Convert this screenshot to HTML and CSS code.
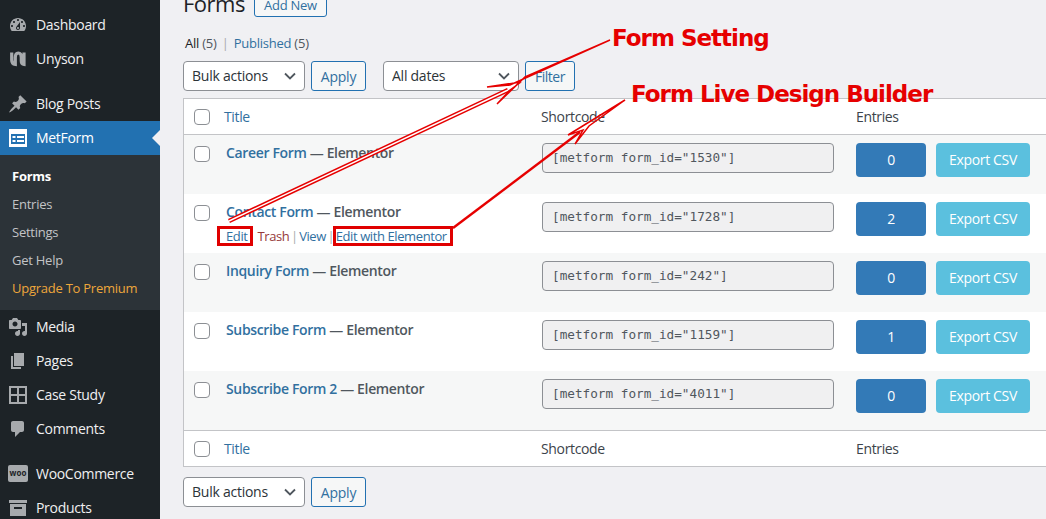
FILE: index.html
```html
<!DOCTYPE html>
<html>
<head>
<meta charset="UTF-8">
<title>Forms</title>
<link rel="stylesheet" href="styles.css">
</head>
<body>
<aside class="sidebar">
    <ul class="menu">
        <li class="menu_item">
            <svg class="icon" viewBox="0 0 20 20"><path d="M3.76 16h12.48c1.1-1.37 1.76-3.11 1.76-5 0-4.42-3.58-8-8-8s-8 3.58-8 8c0 1.89.66 3.63 1.76 5zM10 4c.55 0 1 .45 1 1s-.45 1-1 1-1-.45-1-1 .45-1 1-1zM6 6c.55 0 1 .45 1 1s-.45 1-1 1-1-.45-1-1 .45-1 1-1zm8 0c.55 0 1 .45 1 1s-.45 1-1 1-1-.45-1-1 .45-1 1-1zm-5.37 5.55L12 7v6c0 1.1-.9 2-2 2s-2-.9-2-2c0-.57.24-1.08.63-1.45zM4 10c.55 0 1 .45 1 1s-.45 1-1 1-1-.45-1-1 .45-1 1-1zm12 0c.55 0 1 .45 1 1s-.45 1-1 1-1-.45-1-1 .45-1 1-1zm-5 3c0-.55-.45-1-1-1s-1 .45-1 1 .45 1 1 1 1-.45 1-1z"/></svg>
            Dashboard
        </li>
        <li class="menu_item">
            <svg class="icon line_icon" viewBox="0 0 20 20"><path d="M3.700 3.500v7.500c0 2.700 1.600 4.300 3.600 4.500V8.500c0-2.700 1.300-4.500 3-4.500s3 1.800 3 4.500V12c0 2 .9 3.300 2.700 3.500V3.500"/></svg>
            Unyson
        </li>
        <li class="menu_item separated">
            <svg class="icon" viewBox="0 0 20 20"><path d="M10.44 3.020l1.820-1.820 6.360 6.350-1.830 1.820c-1.050-.68-2.480-.57-3.410.36l-.75.75c-.92.93-1.040 2.350-.35 3.410l-1.830 1.820-2.410-2.410-2.800 2.790c-.42.42-3.380 2.710-3.800 2.290s1.860-3.390 2.280-3.810l2.790-2.790L4.100 9.360l1.830-1.820c1.050.69 2.480.57 3.400-.36l.75-.75c.93-.92 1.050-2.350.36-3.410z"/></svg>
            Blog Posts
        </li>
        <li class="menu_item current">
            <svg class="icon" viewBox="0 0 20 20"><path fill="#fff" fill-rule="evenodd" d="M1 1h18v18H1zM3 6v10h14V6zM4.500 8h3v2h-3zM9 8h7v2H9zM4.500 12h3v2h-3zM9 12h7v2H9z"/></svg>
            MetForm
        </li>
    </ul>
    <ul class="submenu">
        <li class="sub_item active">Forms</li>
        <li class="sub_item">Entries</li>
        <li class="sub_item">Settings</li>
        <li class="sub_item">Get Help</li>
        <li class="sub_item upgrade">Upgrade To Premium</li>
    </ul>
    <ul class="menu">
        <li class="menu_item">
            <svg class="icon" viewBox="0 0 20 20"><path d="M13 11V4c0-.55-.45-1-1-1h-1.670L9 1H5L3.670 3H2c-.55 0-1 .45-1 1v7c0 .55.45 1 1 1h10c.55 0 1-.45 1-1zM7 4.500c1.380 0 2.500 1.120 2.500 2.500S8.380 9.500 7 9.500 4.500 8.380 4.500 7 5.620 4.500 7 4.500zM14 6h5v10.500c0 1.380-1.120 2.500-2.500 2.500S14 17.880 14 16.500s1.120-2.500 2.500-2.500c.17 0 .34.02.5.05V9h-3V6zm-4 8.050V13h2v3.500c0 1.380-1.120 2.500-2.500 2.500S7 17.880 7 16.500 8.120 14 9.500 14c.17 0 .34.02.5.05z"/></svg>
            Media
        </li>
        <li class="menu_item">
            <svg class="icon" viewBox="0 0 20 20"><path d="M6 15V2h10v13H6zm-1 1h8v2H3V5h2v11z"/></svg>
            Pages
        </li>
        <li class="menu_item">
            <svg class="icon" viewBox="0 0 20 20"><path fill-rule="evenodd" d="M1 1h18v18H1zM3 3v6h6V3zM11 3v6h6V3zM3 11v6h6v-6zM11 11v6h6v-6z"/></svg>
            Case Study
        </li>
        <li class="menu_item">
            <svg class="icon" viewBox="0 0 20 20"><path d="M5 2h9c1.100 0 2 .9 2 2v7c0 1.100-.9 2-2 2h-2l-5 5v-5H5c-1.100 0-2-.9-2-2V4c0-1.100.9-2 2-2z"/></svg>
            Comments
        </li>
        <li class="menu_item separated">
            <span class="woo_icon">woo</span>
            WooCommerce
        </li>
        <li class="menu_item">
            <svg class="icon" viewBox="0 0 20 20"><path fill-rule="evenodd" d="M1 2h18v3H1zM2 6h16v12H2zM6 9v2h8V9z"/></svg>
            Products
        </li>
    </ul>
</aside>

<main class="content">
    <div class="page_title">
        <h1>Forms</h1>
        <a class="btn add_new">Add New</a>
    </div>
    <div class="views"><b>All</b> <span class="count">(5)</span> <span class="sep">|</span> <a>Published</a> <span class="count">(5)</span></div>
    <div class="toolbar">
        <select class="select"><option>Bulk actions</option></select>
        <a class="btn apply">Apply</a>
        <select class="select dates"><option>All dates</option></select>
        <a class="btn filter">Filter</a>
    </div>

    <table class="forms">
        <thead>
            <tr>
                <th class="check"><span class="checkbox"></span></th>
                <th class="title"><a>Title</a></th>
                <th class="code">Shortcode</th>
                <th class="entries">Entries</th>
            </tr>
        </thead>
        <tbody>
            <tr>
                <td class="check"><span class="checkbox"></span></td>
                <td class="title"><a class="row_title">Career Form</a><span class="state"> — Elementor</span></td>
                <td class="code"><div class="shortcode">[metform form_id="1530"]</div></td>
                <td class="entries"><div class="row_btns"><a class="count_btn">0</a><a class="export_btn">Export CSV</a></div></td>
            </tr>
            <tr>
                <td class="check"><span class="checkbox"></span></td>
                <td class="title">
                    <a class="row_title">Contact Form</a><span class="state"> — Elementor</span>
                    <div class="row_actions"><a>Edit</a><span class="trash">Trash</span><span class="sep">|</span><a>View</a><span class="sep">|</span><a>Edit with Elementor</a></div>
                </td>
                <td class="code"><div class="shortcode">[metform form_id="1728"]</div></td>
                <td class="entries"><div class="row_btns"><a class="count_btn">2</a><a class="export_btn">Export CSV</a></div></td>
            </tr>
            <tr>
                <td class="check"><span class="checkbox"></span></td>
                <td class="title"><a class="row_title">Inquiry Form</a><span class="state"> — Elementor</span></td>
                <td class="code"><div class="shortcode">[metform form_id="242"]</div></td>
                <td class="entries"><div class="row_btns"><a class="count_btn">0</a><a class="export_btn">Export CSV</a></div></td>
            </tr>
            <tr>
                <td class="check"><span class="checkbox"></span></td>
                <td class="title"><a class="row_title">Subscribe Form</a><span class="state"> — Elementor</span></td>
                <td class="code"><div class="shortcode">[metform form_id="1159"]</div></td>
                <td class="entries"><div class="row_btns"><a class="count_btn">1</a><a class="export_btn">Export CSV</a></div></td>
            </tr>
            <tr>
                <td class="check"><span class="checkbox"></span></td>
                <td class="title"><a class="row_title">Subscribe Form 2</a><span class="state"> — Elementor</span></td>
                <td class="code"><div class="shortcode">[metform form_id="4011"]</div></td>
                <td class="entries"><div class="row_btns"><a class="count_btn">0</a><a class="export_btn">Export CSV</a></div></td>
            </tr>
        </tbody>
        <tfoot>
            <tr>
                <th class="check"><span class="checkbox"></span></th>
                <th class="title"><a>Title</a></th>
                <th class="code">Shortcode</th>
                <th class="entries">Entries</th>
            </tr>
        </tfoot>
    </table>

    <div class="toolbar bottom">
        <select class="select"><option>Bulk actions</option></select>
        <a class="btn apply">Apply</a>
    </div>
</main>

<!-- red markup drawn over the screenshot -->
<svg class="annotations" width="1046" height="519" viewBox="0 0 1046 519">
    <rect class="mark_box" x="218.500" y="227.500" width="33" height="17"/>
    <rect class="mark_box" x="334.500" y="227.500" width="117" height="17"/>

    <line class="shaft" x1="229" y1="221" x2="508" y2="90"/>
    <line class="shaft_inner" x1="229" y1="221" x2="508" y2="90"/>
    <polygon class="head" points="521,82 487,87 510,85 610,40 525,77 497,104 510,90"/>

    <line class="shaft_solid" x1="453" y1="228" x2="580" y2="132"/>
    <polygon class="head" points="625,100 568,135 583,130 575,144 589,126"/>

    <text class="mark_text" x="612" y="46">Form Setting</text>
    <text class="mark_text" x="631" y="102">Form Live Design Builder</text>
</svg>
</body>
</html>
```
FILE: styles.css
```css
* {
    box-sizing: border-box;
}

html, body {
    margin: 0;
    height: 519px;
    overflow: hidden;
}

body {
    position: relative;
    display: flex;
    background: #f0f0f3;
    color: #3c434a;
    font-family: "Open Sans", "Noto Sans", sans-serif;
    font-size: 13px;
    letter-spacing: -0.25px;
}

a {
    color: #31709f;
    text-decoration: none;
}

ul {
    list-style: none;
    margin: 0;
    padding: 0;
}

/* sidebar */

.sidebar {
    flex: 0 0 160px;
    height: 519px;
    padding-top: 8px;
    overflow: hidden;
    background: #1d2327;
}

.menu_item {
    position: relative;
    display: flex;
    align-items: center;
    gap: 8px;
    height: 34px;
    padding-left: 8px;
    padding-bottom: 1px;
    color: #f0f0f1;
    font-size: 14px;
    letter-spacing: -0.3px;
}

.separated {
    margin-top: 11px;
}

.icon {
    flex: none;
    width: 20px;
    height: 20px;
    fill: #a7aaad;
}

.line_icon {
    fill: none;
    stroke: #a7aaad;
    stroke-width: 3.200;
}

.current {
    background: #2271b1;
    color: #fff;
}

.current::after {
    content: "";
    position: absolute;
    right: 0;
    top: 9px;
    border: 8px solid transparent;
    border-right-color: #f0f0f3;
    border-left-width: 0;
}

.submenu {
    padding: 7px 0 8px;
    background: #2c3338;
}

.sub_item {
    height: 28px;
    padding-left: 12px;
    line-height: 28px;
    color: #c3c4c7;
}

.active {
    color: #fff;
    font-weight: 700;
}

.upgrade {
    color: #eea73b;
}

.woo_icon {
    flex: none;
    width: 20px;
    height: 17px;
    border-radius: 2px;
    background: #a7aaad;
    color: #1d2327;
    font-size: 8px;
    font-weight: 700;
    line-height: 16px;
    text-align: center;
    letter-spacing: 0;
}

/* main column */

.content {
    flex: 1;
    min-width: 0;
    padding-left: 23px;
}

.page_title {
    display: flex;
    align-items: flex-end;
    gap: 9px;
    height: 30px;
    margin-top: -13px;
}

.page_title h1 {
    margin: 0 0 -1px;
    color: #1d2327;
    font-size: 22px;
    font-weight: 400;
    letter-spacing: -0.5px;
    line-height: 30px;
}

.views {
    height: 20px;
    margin: 16px 0 8px 2px;
    line-height: 20px;
}

.views b {
    font-weight: 400;
    color: #1d2327;
}

.count {
    color: #50575e;
}

.views .sep {
    margin: 0 2px;
}

.sep {
    color: #a7aaad;
}

.toolbar {
    display: flex;
    height: 30px;
    gap: 6px;
    margin-bottom: 7px;
}

.toolbar.bottom {
    margin-top: 10px;
}

.select {
    appearance: none;
    width: 122px;
    height: 30px;
    margin: 0;
    padding: 0 24px 2px 8px;
    border: 1px solid #8c8f94;
    border-radius: 4px;
    background: #fff url('data:image/svg+xml;utf8,<svg xmlns="http://www.w3.org/2000/svg" width="12" height="8"><path d="M1 1.500l5 5 5-5" fill="none" stroke="%2350575e" stroke-width="1.800"/></svg>') no-repeat right 8px center;
    color: #2c3338;
    font-family: inherit;
    font-size: 14px;
    letter-spacing: -0.25px;
}

.dates {
    width: 136px;
    margin-left: 11px;
}

.btn {
    display: flex;
    align-items: center;
    justify-content: center;
    height: 30px;
    border: 1px solid #2271b1;
    border-radius: 3px;
    background: #f6f7f7;
    font-size: 14px;
}

.apply {
    width: 55px;
}

.filter {
    width: 50px;
    letter-spacing: -0.5px;
}

.add_new {
    width: 73px;
    height: 24px;
    font-size: 13px;
    font-weight: 500;
}

/* table */

.forms {
    width: 880px;
    table-layout: fixed;
    border-collapse: separate;
    border-spacing: 0;
    border: 1px solid #c3c4c7;
    background: #fff;
    font-size: 14px;
    letter-spacing: -0.35px;
}

.forms th, .forms td {
    padding: 0;
    text-align: left;
    vertical-align: top;
    font-weight: 400;
}

.forms thead th {
    height: 36px;
    border-bottom: 1px solid #c3c4c7;
}

.forms tfoot th {
    height: 36px;
    border-top: 1px solid #c3c4c7;
}

.forms th {
    padding-top: 8px;
    line-height: 20px;
}

.forms tbody tr {
    height: 59px;
}

.forms tbody tr:nth-child(odd) {
    background: #f6f7f7;
}

.forms .check {
    width: 33px;
    padding: 11px 0 0 10px;
}

.forms th.check {
    padding-top: 10px;
}

.forms .title {
    width: 316px;
    padding-left: 9px;
}

.forms td.title {
    padding-top: 8px;
    line-height: 20px;
}

.forms th.title {
    padding-left: 7px;
}

.forms .code {
    width: 315px;
    padding-left: 8px;
}

.forms td.code {
    padding: 8px 0 0 9px;
}

.forms .entries {
    padding-left: 8px;
}

.forms td.entries {
    padding-top: 8px;
}

.checkbox {
    display: block;
    width: 16px;
    height: 16px;
    border: 1px solid #8c8f94;
    border-radius: 4px;
    background: #fff;
}

.row_title {
    font-weight: 600;
}

.state {
    color: #50575e;
    font-weight: 600;
}

.row_actions {
    display: flex;
    margin-top: 4px;
    font-size: 13px;
    letter-spacing: -0.4px;
}

.row_actions .trash {
    margin-left: 10px;
    color: #963a3a;
}

.row_actions .sep {
    margin: 0 1.500px;
}

.shortcode {
    width: 292px;
    height: 30px;
    padding-left: 9px;
    border: 1px solid #8c8f94;
    border-radius: 4px;
    background: #f0f0f1;
    color: #50575e;
    font-family: "DejaVu Sans Mono", "Liberation Mono", monospace;
    font-size: 12.700px;
    letter-spacing: 0;
    line-height: 27px;
}

.row_btns {
    display: flex;
    gap: 10px;
}

.count_btn, .export_btn {
    height: 34px;
    border-radius: 4px;
    color: #fff;
    line-height: 34px;
    text-align: center;
}

.count_btn {
    width: 70px;
    background: #337ab7;
}

.export_btn {
    width: 94px;
    background: #5bc0de;
}

/* markup layer */

.annotations {
    position: absolute;
    left: 0;
    top: 0;
    pointer-events: none;
}

.mark_box {
    fill: none;
    stroke: #e00000;
    stroke-width: 3;
}

.shaft {
    stroke: #e60000;
    stroke-width: 4.500;
}

.shaft_inner {
    stroke: #fff;
    stroke-width: 1.400;
}

.shaft_solid {
    stroke: #e60000;
    stroke-width: 2.400;
}

.head {
    fill: rgba(255, 255, 255, 0.3);
    stroke: #e60000;
    stroke-width: 1.500;
}

.mark_text {
    fill: #e60000;
    font-family: "DejaVu Sans", sans-serif;
    font-size: 23px;
    font-weight: 700;
    letter-spacing: -1px;
}
```
